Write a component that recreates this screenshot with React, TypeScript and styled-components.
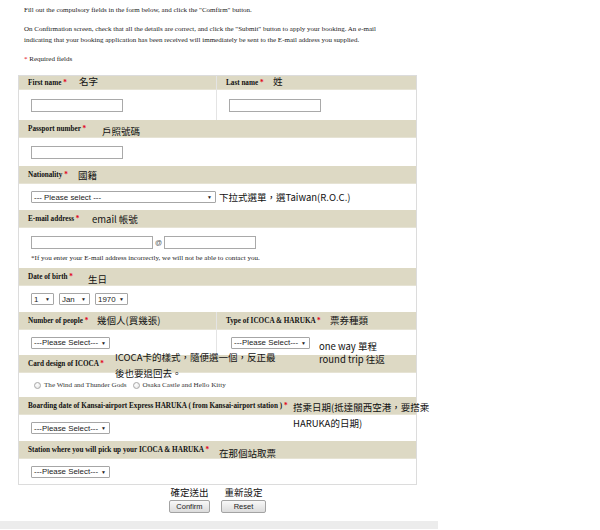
import styled, { createGlobalStyle } from "styled-components";

const GlobalStyle = createGlobalStyle`
  html, body {
    margin: 0;
    padding: 0;
    background: #fff;
  }
  body {
    font-family: "Liberation Serif", "Times New Roman", serif;
    color: #222;
  }
`;

const notes = [
  { x: 79, y: 75, text: "名字" },
  { x: 273, y: 75, text: "姓" },
  { x: 102, y: 124.5, text: "戶照號碼" },
  { x: 78, y: 168.5, text: "國籍" },
  { x: 219, y: 190.5, text: "下拉式選單，選Taiwan(R.O.C.)" },
  { x: 92, y: 213, text: "email 帳號" },
  { x: 88, y: 272.5, text: "生日" },
  { x: 97, y: 313.5, text: "幾個人(買幾張)" },
  { x: 330, y: 313.5, text: "票券種類" },
  { x: 319, y: 339.5, text: "one way 單程" },
  { x: 319, y: 352.5, text: "round trip 往返" },
  { x: 115, y: 350.5, text: "ICOCA卡的樣式，隨便選一個，反正最" },
  { x: 115, y: 366.5, text: "後也要退回去。" },
  { x: 293, y: 400.5, text: "搭乘日期(抵達關西空港，要搭乘" },
  { x: 293, y: 416.5, text: "HARUKA的日期)" },
  { x: 219, y: 446.5, text: "在那個站取票" },
];

const Req = () => <Star>*</Star>;

const Select = ({ label, width }: { label: string; width: number }) => (
  <SelectBox $w={width}>
    <span>{label}</span>
    <Arrow>▼</Arrow>
  </SelectBox>
);

export default function App() {
  return (
    <Page>
      <GlobalStyle />
      <Content>
        <Intro>
          <p>Fill out the compulsory fields in the form below, and click the "Comfirm" button.</p>
          <Para>
            On Confirmation screen, check that all the details are correct, and click the "Submit" button to apply your booking. An e-mail
            <br />
            indicating that your booking application has been received will immediately be sent to the E-mail address you supplied.
          </Para>
          <Para>
            <Req /> Required fields
          </Para>
        </Intro>

        <Form>
          <TwoCol>
            <Cell>
              <Header $h={14}>
                <Label>First name <Req /></Label>
              </Header>
              <Body $h={30}>
                <TextInput $w={92} />
              </Body>
            </Cell>
            <Cell $divider>
              <Header $h={14}>
                <Label>Last name <Req /></Label>
              </Header>
              <Body $h={30}>
                <TextInput $w={92} />
              </Body>
            </Cell>
          </TwoCol>

          <Header>
            <Label>Passport number <Req /></Label>
          </Header>
          <Body $h={28}>
            <TextInput $w={92} />
          </Body>

          <Header>
            <Label>Nationality <Req /></Label>
          </Header>
          <Body $h={26}>
            <Select label="--- Please select ---" width={185} />
          </Body>

          <Header>
            <Label>E-mail address <Req /></Label>
          </Header>
          <Body $h={40} $column>
            <EmailLine>
              <TextInput $w={122} />
              <At>@</At>
              <TextInput $w={92} />
            </EmailLine>
            <Hint>*If you enter your E-mail address incorrectly, we will not be able to contact you.</Hint>
          </Body>

          <Header>
            <Label>Date of birth <Req /></Label>
          </Header>
          <Body $h={26}>
            <SelectRow>
              <Select label="1" width={23} />
              <Select label="Jan" width={31} />
              <Select label="1970" width={33} />
            </SelectRow>
          </Body>

          <TwoCol>
            <Cell>
              <Header>
                <Label>Number of people <Req /></Label>
              </Header>
              <Body $h={25}>
                <Select label="---Please Select---" width={79} />
              </Body>
            </Cell>
            <Cell $divider>
              <Header>
                <Label>Type of ICOCA &amp; HARUKA <Req /></Label>
              </Header>
              <Body $h={25} $indent={14}>
                <Select label="---Please Select---" width={79} />
              </Body>
            </Cell>
          </TwoCol>

          <Header>
            <Label>Card design of ICOCA <Req /></Label>
          </Header>
          <Body $h={24}>
            <RadioGroup>
              <RadioItem>
                <Radio />
                The Wind and Thunder Gods
              </RadioItem>
              <RadioItem>
                <Radio />
                Osaka Castle and Hello Kitty
              </RadioItem>
            </RadioGroup>
          </Body>

          <Header>
            <Label>Boarding date of Kansai-airport Express HARUKA ( from Kansai-airport station ) <Req /></Label>
          </Header>
          <Body $h={26}>
            <Select label="---Please Select---" width={79} />
          </Body>

          <Header>
            <Label>Station where you will pick up your ICOCA &amp; HARUKA <Req /></Label>
          </Header>
          <Body $h={25}>
            <Select label="---Please Select---" width={79} />
          </Body>
        </Form>

        <Actions>
          <ActionGroup>
            <ActionNote>確定送出</ActionNote>
            <Button $w={41}>Confirm</Button>
          </ActionGroup>
          <ActionGroup>
            <ActionNote>重新設定</ActionNote>
            <Button $w={45}>Reset</Button>
          </ActionGroup>
        </Actions>
      </Content>

      <FooterBar />

      {notes.map((n) => (
        <Note key={n.text} $x={n.x} $y={n.y}>
          {n.text}
        </Note>
      ))}
    </Page>
  );
}

const Page = styled.div`
  position: relative;
  width: 600px;
  height: 530px;
  overflow: hidden;
`;

const Content = styled.div`
  padding: 5px 0 0 18px;
`;

const Intro = styled.div`
  padding-left: 6px;
  font-size: 7px;
  line-height: 11px;
  color: #1a1a1a;

  p {
    margin: 0;
  }
`;

const Para = styled.p`
  && {
    margin-top: 8px;
  }
`;

const Star = styled.span`
  color: #e2001a;
`;

const Form = styled.div`
  width: 399px;
  margin-top: 10px;
  border: 1px solid #dcdcdc;
  box-sizing: border-box;
`;

const TwoCol = styled.div`
  display: grid;
  grid-template-columns: 197px 1fr;
`;

const Cell = styled.div<{ $divider?: boolean }>`
  border-left: ${(p) => (p.$divider ? "1px solid #e4e4e4" : "none")};
`;

const Header = styled.div<{ $h?: number }>`
  height: ${(p) => p.$h ?? 18}px;
  box-sizing: border-box;
  display: flex;
  align-items: center;
  padding-left: 9px;
  background: #ddd9c4;
  border-bottom: 1px solid #e6e3d4;
`;

const Label = styled.span`
  font-size: 7.2px;
  font-weight: 700;
  color: #111;
  white-space: nowrap;
`;

const Body = styled.div<{ $h: number; $column?: boolean; $indent?: number }>`
  height: ${(p) => p.$h}px;
  box-sizing: border-box;
  display: flex;
  flex-direction: ${(p) => (p.$column ? "column" : "row")};
  justify-content: ${(p) => (p.$column ? "center" : "flex-start")};
  align-items: ${(p) => (p.$column ? "flex-start" : "center")};
  padding-left: ${(p) => p.$indent ?? 12}px;
  background: #fff;
`;

const TextInput = styled.input<{ $w: number }>`
  width: ${(p) => p.$w}px;
  height: 13px;
  box-sizing: border-box;
  margin: 0;
  padding: 0;
  border: 1px solid #a9a9a9;
  background: #fff;
  outline: none;
`;

const EmailLine = styled.div`
  display: flex;
  align-items: center;
  gap: 2px;
  margin-top: 2px;
`;

const At = styled.span`
  font-family: "Liberation Sans", Arial, sans-serif;
  font-size: 7px;
  color: #555;
`;

const Hint = styled.div`
  margin-top: 5px;
  font-size: 7.1px;
  color: #1a1a1a;
`;

const SelectBox = styled.div<{ $w: number }>`
  width: ${(p) => p.$w}px;
  height: 12px;
  box-sizing: border-box;
  display: flex;
  align-items: center;
  justify-content: space-between;
  padding: 0 3px 0 2px;
  border: 1px solid #a6a6a6;
  border-radius: 1px;
  background: #fff;
  font-family: "Liberation Sans", Arial, sans-serif;
  font-size: 7.9px;
  color: #222;
  white-space: nowrap;
`;

const Arrow = styled.span`
  font-size: 5px;
  color: #222;
`;

const SelectRow = styled.div`
  display: flex;
  gap: 5px;
`;

const RadioGroup = styled.div`
  display: flex;
  gap: 6px;
  padding-left: 3px;
`;

const RadioItem = styled.label`
  display: flex;
  align-items: center;
  gap: 3px;
  font-size: 7.1px;
  color: #333;
`;

const Radio = styled.span`
  width: 7px;
  height: 7px;
  box-sizing: border-box;
  border-radius: 50%;
  border: 1px solid #a8a8a8;
  background: radial-gradient(circle at 40% 35%, #fff, #e2e2e2);
`;

const Actions = styled.div`
  width: 399px;
  display: flex;
  justify-content: center;
  gap: 11px;
  margin-top: 1px;
`;

const ActionGroup = styled.div`
  display: flex;
  flex-direction: column;
  align-items: center;
  gap: 2px;
`;

const ActionNote = styled.span`
  font-family: "Noto Sans CJK TC", sans-serif;
  font-size: 9.5px;
  line-height: 12px;
  color: #111;
`;

const Button = styled.button<{ $w: number }>`
  width: ${(p) => p.$w}px;
  height: 13px;
  box-sizing: border-box;
  margin: 0;
  padding: 0;
  border: 1px solid #a3a3a3;
  border-radius: 2px;
  background: linear-gradient(#f8f8f8, #dcdcdc);
  font-family: "Liberation Sans", Arial, sans-serif;
  font-size: 7.5px;
  color: #222;
`;

const FooterBar = styled.div`
  width: 438px;
  height: 8px;
  margin-top: 8px;
  background: #ececec;
`;

const Note = styled.span<{ $x: number; $y: number }>`
  position: absolute;
  left: ${(p) => p.$x}px;
  top: ${(p) => p.$y}px;
  font-family: "Noto Sans CJK TC", sans-serif;
  font-size: 9.5px;
  line-height: 12px;
  color: #111;
  white-space: nowrap;
`;
